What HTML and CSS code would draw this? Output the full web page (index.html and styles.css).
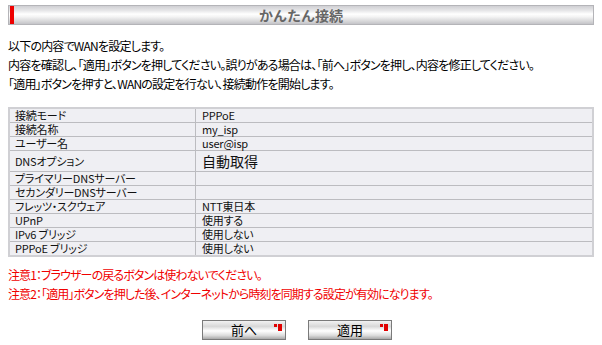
FILE: index.html
```html
<!doctype html>
<html lang="ja">
  <head>
    <meta charset="utf-8">
    <title>かんたん接続</title>
    <link rel="stylesheet" href="styles.css">
  </head>
  <body>
    <div class="page">
      <div class="title-bar">
        <span class="title-mark"></span>
        <h1>かんたん接続</h1>
      </div>

      <div class="intro">
        <p>以下の内容でWANを設定します。</p>
        <p>内容を確認し、「適用」ボタンを押してください。誤りがある場合は、「前へ」ボタンを押し、内容を修正してください。</p>
        <p>「適用」ボタンを押すと、WANの設定を行ない、接続動作を開始します。</p>
      </div>

      <table class="summary">
        <tr><td class="label">接続モード</td><td>PPPoE</td></tr>
        <tr><td class="label">接続名称</td><td>my_isp</td></tr>
        <tr><td class="label">ユーザー名</td><td>user@isp</td></tr>
        <tr class="tall"><td class="label">DNSオプション</td><td class="big">自動取得</td></tr>
        <tr><td class="label">プライマリーDNSサーバー</td><td></td></tr>
        <tr><td class="label">セカンダリーDNSサーバー</td><td></td></tr>
        <tr><td class="label">フレッツ・スクウェア</td><td>NTT東日本</td></tr>
        <tr><td class="label">UPnP</td><td>使用する</td></tr>
        <tr><td class="label">IPv6 ブリッジ</td><td>使用しない</td></tr>
        <tr><td class="label">PPPoE ブリッジ</td><td>使用しない</td></tr>
      </table>

      <div class="notes">
        <p>注意1：ブラウザーの戻るボタンは使わないでください。</p>
        <p>注意2：「適用」ボタンを押した後、インターネットから時刻を同期する設定が有効になります。</p>
      </div>

      <div class="buttons">
        <button type="button" class="btn">前へ
          <svg class="btn-mark" width="8" height="7" viewBox="0 0 8 7"><rect x="0" y="0" width="3" height="3" fill="#e00000"/><rect x="4" y="0" width="4" height="3" fill="#e00000"/><rect x="4" y="3" width="4" height="4" fill="#e00000"/></svg>
        </button>
        <button type="button" class="btn">適用
          <svg class="btn-mark" width="8" height="7" viewBox="0 0 8 7"><rect x="0" y="0" width="3" height="3" fill="#e00000"/><rect x="4" y="0" width="4" height="3" fill="#e00000"/><rect x="4" y="3" width="4" height="4" fill="#e00000"/></svg>
        </button>
      </div>
    </div>
  </body>
</html>
```

FILE: styles.css
```css
body {
  margin: 0;
  background-color: #ffffff;
  color: #000000;
  font-family: "Noto Sans CJK JP", "Noto Sans", sans-serif;
  font-size: 12px;
}
p {
  margin: 0;
}
.page {
  padding: 5px 8px 0 8px;
}
.title-bar {
  position: relative;
  height: 18px;
  border: 1px solid #b4b4b8;
  background: linear-gradient(#cfcfd3 0%, #e6e6e8 25%, #ffffff 45%, #f4f4f4 60%, #d6d6d8 85%, #c4c4c8 100%);
  display: flex;
  align-items: center;
  justify-content: center;
}
.title-mark {
  position: absolute;
  left: 1px;
  top: 0;
  width: 4px;
  height: 18px;
  background-color: #ee0000;
}
h1 {
  margin: 0;
  font-size: 14px;
  line-height: 18px;
  font-weight: bold;
  color: #666666;
}
.intro {
  margin-top: 11px;
  line-height: 19px;
  font-feature-settings: "palt";
  letter-spacing: -0.8px;
}
.summary {
  margin-top: 14px;
  width: 100%;
  border-collapse: collapse;
  border: 2px solid #d0d0d4;
  background-color: #efeff3;
  font-feature-settings: "palt";
  letter-spacing: -0.2px;
}
.summary td {
  border: 1px solid #bcbcc0;
  height: 13px;
  padding: 0 6px;
  line-height: 13px;
  font-size: 11px;
  color: #111111;
}
.summary td.label {
  width: 174px;
  padding-left: 5px;
}
.summary tr.tall td {
  height: 20px;
}
.summary td.big {
  font-size: 14px;
  letter-spacing: 0;
}
.notes {
  margin-top: 8px;
  line-height: 19px;
  color: #f00000;
  font-feature-settings: "palt";
  letter-spacing: -0.9px;
}
.buttons {
  margin-top: 17px;
  padding-right: 8px;
  display: flex;
  justify-content: center;
  gap: 22px;
}
.btn {
  position: relative;
  width: 84px;
  height: 20px;
  padding: 0;
  border: 1px solid #7a7a7a;
  background: linear-gradient(#f2f2f2 0%, #d8d8d8 30%, #ffffff 55%, #dcdcdc 80%, #a8a8a8 100%);
  font-family: "Noto Sans CJK JP", sans-serif;
  font-size: 13px;
  line-height: 18px;
  color: #000000;
  cursor: pointer;
}
.btn-mark {
  position: absolute;
  right: 3px;
  top: 3px;
}
```
